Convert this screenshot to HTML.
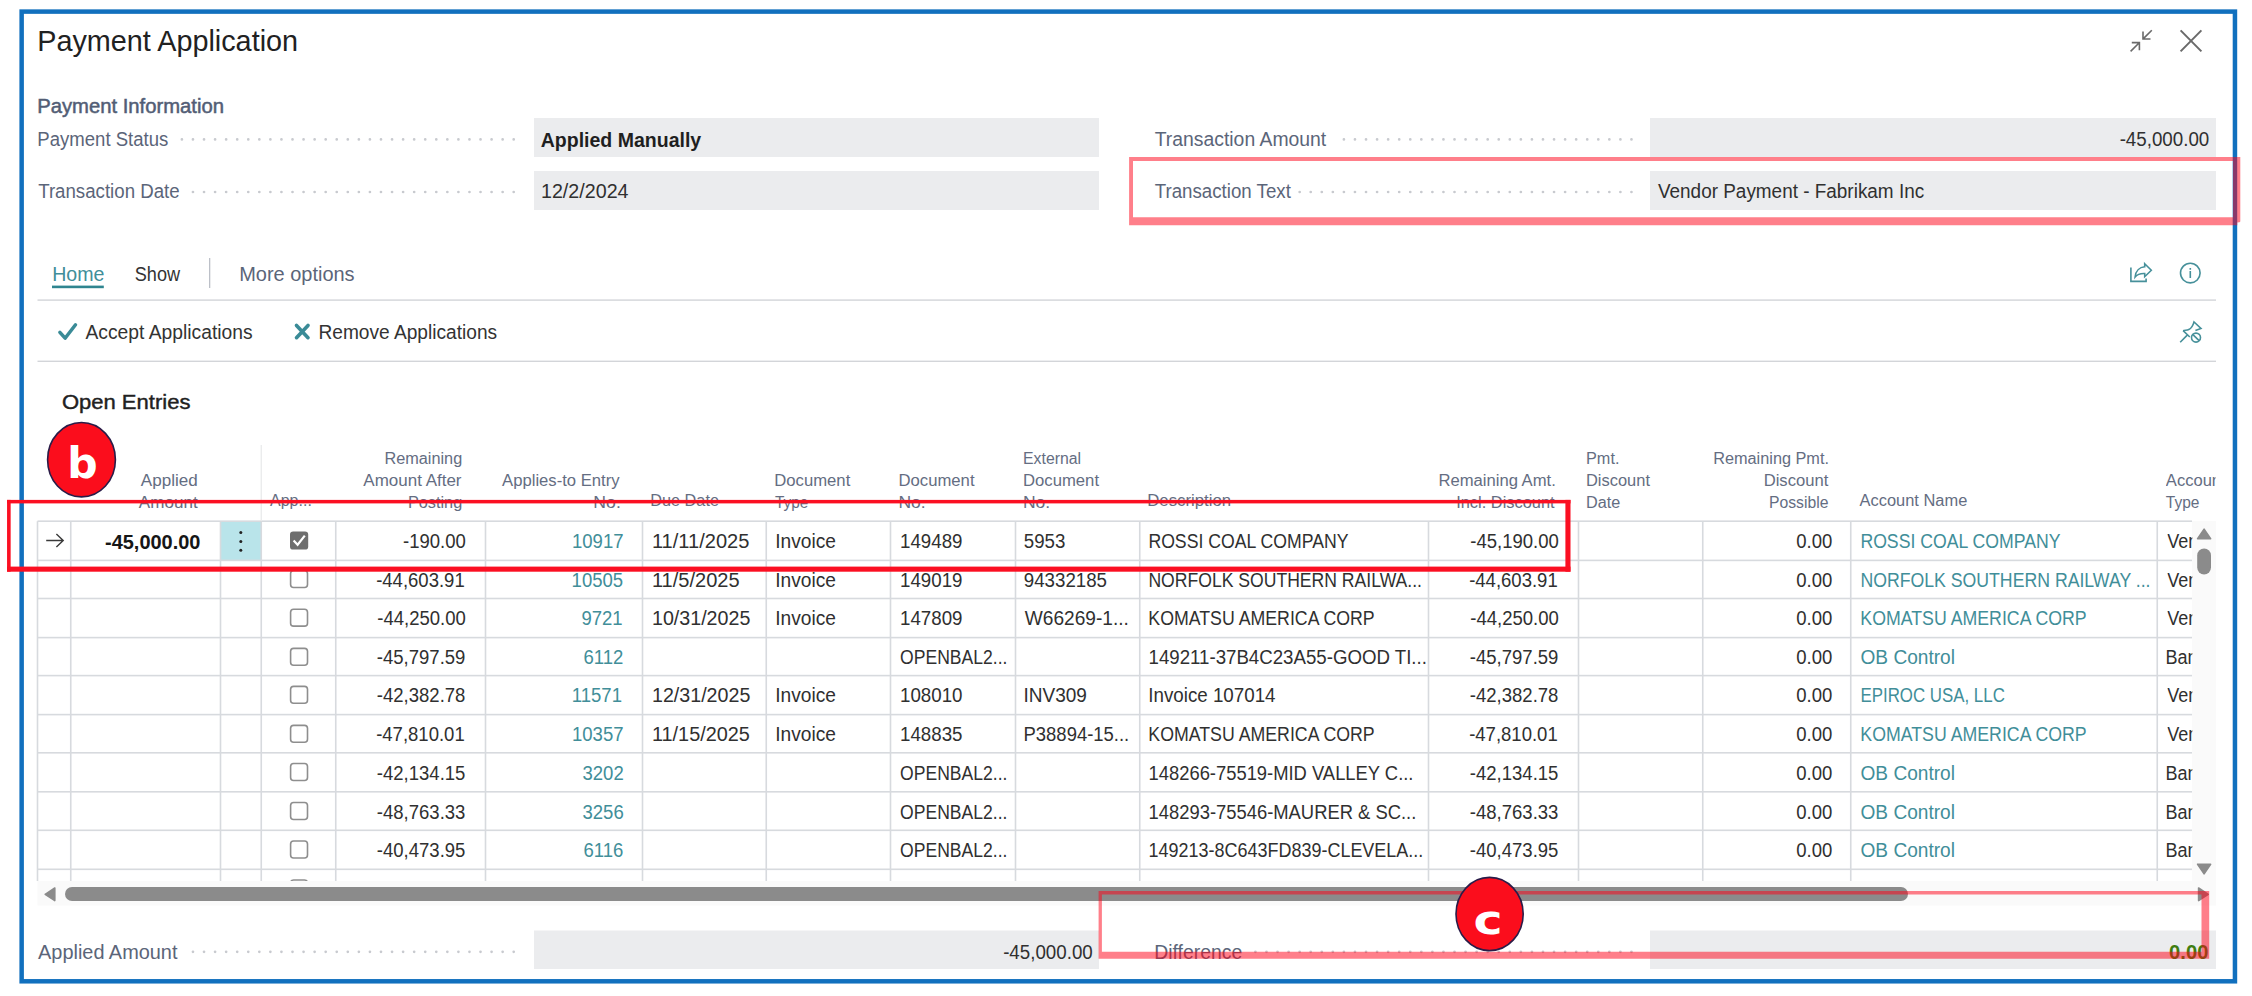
<!DOCTYPE html>
<html lang="en"><head><meta charset="utf-8"><title>Payment Application</title>
<style>
html,body{margin:0;padding:0;background:#fff}
body{width:2252px;height:996px;position:relative;overflow:hidden;font-family:'Liberation Sans',sans-serif}
.t{position:absolute;left:0;top:0;white-space:pre;line-height:1;font-family:'Liberation Sans',sans-serif;transform-origin:0 0}
svg{position:absolute;left:0;top:0;overflow:visible}
</style></head>
<body>
<svg id="boxes" width="2252" height="996" viewBox="0 0 2252 996">
<rect x="21.65" y="11.6" width="2213.3" height="969.7" fill="#fff" stroke="#1170be" stroke-width="4.5"/>
<defs><clipPath id="tb"><rect x="30" y="440" width="2190" height="441"/></clipPath></defs>
<g clip-path="url(#tb)">
<rect x="220.8" y="521.4" width="40.4" height="38.6" fill="#b9e4ea"/>
<rect x="37.5" y="520.4" width="2154.5" height="1.6" fill="#d7dade"/>
<rect x="37.5" y="559.6" width="2154.5" height="1.6" fill="#d7dade"/>
<rect x="37.5" y="597.7" width="2154.5" height="1.6" fill="#d7dade"/>
<rect x="37.5" y="636.8" width="2154.5" height="1.6" fill="#d7dade"/>
<rect x="37.5" y="674.8" width="2154.5" height="1.6" fill="#d7dade"/>
<rect x="37.5" y="713.8" width="2154.5" height="1.6" fill="#d7dade"/>
<rect x="37.5" y="752" width="2154.5" height="1.6" fill="#d7dade"/>
<rect x="37.5" y="791" width="2154.5" height="1.6" fill="#d7dade"/>
<rect x="37.5" y="829.5" width="2154.5" height="1.6" fill="#d7dade"/>
<rect x="37.5" y="868.5" width="2154.5" height="1.6" fill="#d7dade"/>
<rect x="36.7" y="521.2" width="1.6" height="359.8" fill="#d7dade"/>
<rect x="69.95" y="521.2" width="1.6" height="359.8" fill="#d7dade"/>
<rect x="219.7" y="521.2" width="1.6" height="359.8" fill="#d7dade"/>
<rect x="260.45" y="521.2" width="1.6" height="359.8" fill="#d7dade"/>
<rect x="334.95" y="521.2" width="1.6" height="359.8" fill="#d7dade"/>
<rect x="484.7" y="521.2" width="1.6" height="359.8" fill="#d7dade"/>
<rect x="641.7" y="521.2" width="1.6" height="359.8" fill="#d7dade"/>
<rect x="765.45" y="521.2" width="1.6" height="359.8" fill="#d7dade"/>
<rect x="889.7" y="521.2" width="1.6" height="359.8" fill="#d7dade"/>
<rect x="1014.7" y="521.2" width="1.6" height="359.8" fill="#d7dade"/>
<rect x="1138.95" y="521.2" width="1.6" height="359.8" fill="#d7dade"/>
<rect x="1427.7" y="521.2" width="1.6" height="359.8" fill="#d7dade"/>
<rect x="1577.7" y="521.2" width="1.6" height="359.8" fill="#d7dade"/>
<rect x="1701.95" y="521.2" width="1.6" height="359.8" fill="#d7dade"/>
<rect x="1849.95" y="521.2" width="1.6" height="359.8" fill="#d7dade"/>
<rect x="2156.45" y="521.2" width="1.6" height="359.8" fill="#d7dade"/>
<rect x="260.6" y="445" width="1.3" height="76" fill="#e9eaec"/>
<rect x="290.6" y="570.55" width="16.9" height="16.9" fill="#fff" rx="3" stroke="#8e8e8e" stroke-width="1.6"/>
<rect x="290.6" y="609.25" width="16.9" height="16.9" fill="#fff" rx="3" stroke="#8e8e8e" stroke-width="1.6"/>
<rect x="290.6" y="648.35" width="16.9" height="16.9" fill="#fff" rx="3" stroke="#8e8e8e" stroke-width="1.6"/>
<rect x="290.6" y="686.35" width="16.9" height="16.9" fill="#fff" rx="3" stroke="#8e8e8e" stroke-width="1.6"/>
<rect x="290.6" y="725.35" width="16.9" height="16.9" fill="#fff" rx="3" stroke="#8e8e8e" stroke-width="1.6"/>
<rect x="290.6" y="763.55" width="16.9" height="16.9" fill="#fff" rx="3" stroke="#8e8e8e" stroke-width="1.6"/>
<rect x="290.6" y="802.55" width="16.9" height="16.9" fill="#fff" rx="3" stroke="#8e8e8e" stroke-width="1.6"/>
<rect x="290.6" y="841.05" width="16.9" height="16.9" fill="#fff" rx="3" stroke="#8e8e8e" stroke-width="1.6"/>
<rect x="290.6" y="880.05" width="16.9" height="16.9" fill="#fff" rx="3" stroke="#8e8e8e" stroke-width="1.6"/>
</g>
<rect x="534" y="118" width="565" height="39" fill="#ebecee"/>
<rect x="534" y="930.5" width="565" height="38.5" fill="#ebecee"/>
<rect x="1650" y="118" width="566" height="39" fill="#ebecee"/>
<rect x="1650" y="930.5" width="566" height="38.5" fill="#ebecee"/>
<rect x="534" y="171" width="565" height="39" fill="#ebecee"/>
<rect x="1650" y="171" width="566" height="39" fill="#ebecee"/>
<line x1="181.9" y1="139.4" x2="521" y2="139.4" stroke="#c8cacf" stroke-width="2.7" stroke-linecap="round" stroke-dasharray="0.01 11.05"/>
<line x1="192.96" y1="192" x2="521" y2="192" stroke="#c8cacf" stroke-width="2.7" stroke-linecap="round" stroke-dasharray="0.01 11.05"/>
<line x1="1343.9" y1="139.4" x2="1632" y2="139.4" stroke="#c8cacf" stroke-width="2.7" stroke-linecap="round" stroke-dasharray="0.01 11.05"/>
<line x1="1299.66" y1="192" x2="1632" y2="192" stroke="#c8cacf" stroke-width="2.7" stroke-linecap="round" stroke-dasharray="0.01 11.05"/>
<line x1="192.96" y1="951.8" x2="521" y2="951.8" stroke="#c8cacf" stroke-width="2.7" stroke-linecap="round" stroke-dasharray="0.01 11.05"/>
<line x1="1255.42" y1="951.8" x2="1632" y2="951.8" stroke="#c8cacf" stroke-width="2.7" stroke-linecap="round" stroke-dasharray="0.01 11.05"/>
<rect x="52" y="285.6" width="51.8" height="2.6" fill="#2f858f"/>
<rect x="209" y="258" width="1.3" height="30" fill="#bcc0c8"/>
<rect x="37.5" y="299.4" width="2178.5" height="1.4" fill="#d3d5d9"/>
<rect x="37.5" y="360.6" width="2178.5" height="1.4" fill="#d3d5d9"/>
<rect x="2192" y="521" width="24" height="360" fill="#fafafa"/>
<rect x="37.5" y="881" width="2178.5" height="24.5" fill="#fafafa"/>
<rect x="65" y="887" width="1843" height="14" fill="#8b8b8b" rx="7"/>
<rect x="2197.2" y="548.6" width="13.8" height="25.8" fill="#8b8b8b" rx="6.9"/>
</svg>
<div id="texts">
<span class="t" style="font-size:29.4px;color:#212121;transform:translate(37.24px,26.25px) scaleX(0.9793)">Payment Application</span>
<span class="t" style="font-size:20.1px;color:#525d75;transform:translate(37.19px,96.2px) scaleX(1.0071);-webkit-text-stroke:0.5px #525d75">Payment Information</span>
<span class="t" style="font-size:19.4px;color:#5b6579;transform:translate(37.29px,130.25px) scaleX(0.9575)">Payment Status</span>
<span class="t" style="font-size:19.4px;color:#5b6579;transform:translate(38.18px,181.5px) scaleX(0.9628)">Transaction Date</span>
<span class="t" style="font-size:19.4px;color:#1f1f1f;transform:translate(540.72px,130.8px) scaleX(1.0065);font-weight:700">Applied Manually</span>
<span class="t" style="font-size:19.4px;color:#303030;transform:translate(540.97px,181.5px) scaleX(1.0149)">12/2/2024</span>
<span class="t" style="font-size:19.4px;color:#5b6579;transform:translate(1154.68px,130.25px) scaleX(0.9990)">Transaction Amount</span>
<span class="t" style="font-size:19.4px;color:#5b6579;transform:translate(1154.68px,181.5px) scaleX(0.9650)">Transaction Text</span>
<span class="t" style="font-size:19.4px;color:#303030;transform:translate(2119.63px,130.25px) scaleX(0.9670)">-45,000.00</span>
<span class="t" style="font-size:19.4px;color:#303030;transform:translate(1657.98px,181.5px) scaleX(0.9762)">Vendor Payment - Fabrikam Inc</span>
<span class="t" style="font-size:19.4px;color:#418e99;transform:translate(52.18px,265.25px) scaleX(1.0112)">Home</span>
<span class="t" style="font-size:19.4px;color:#333333;transform:translate(134.77px,265.25px) scaleX(0.9333)">Show</span>
<span class="t" style="font-size:19.4px;color:#5b6579;transform:translate(239.14px,265.25px) scaleX(1.0300)">More options</span>
<span class="t" style="font-size:19.4px;color:#333333;transform:translate(85.48px,322.75px) scaleX(0.9942)">Accept Applications</span>
<span class="t" style="font-size:19.4px;color:#333333;transform:translate(318.48px,322.75px) scaleX(0.9863)">Remove Applications</span>
<span class="t" style="font-size:20.3px;color:#212121;transform:translate(61.89px,392.25px) scaleX(1.0856);-webkit-text-stroke:0.4px #212121">Open Entries</span>
<span class="t" style="font-size:19.4px;color:#5b6579;transform:translate(38.08px,942.7px) scaleX(1.0259)">Applied Amount</span>
<span class="t" style="font-size:19.4px;color:#303030;transform:translate(1003.13px,942.6px) scaleX(0.9670)">-45,000.00</span>
<span class="t" style="font-size:19.4px;color:#5b6579;transform:translate(1154.2px,942.7px) scaleX(1.0006)">Difference</span>
<span class="t" style="font-size:19.4px;color:#3f7d10;transform:translate(2169.06px,942.6px) scaleX(1.0417);font-weight:700">0.00</span>
<span class="t" style="font-size:17.3px;color:#646d82;transform:translate(140.85px,472.25px) scaleX(0.9868)">Applied</span>
<span class="t" style="font-size:17.3px;color:#646d82;transform:translate(138.85px,494.25px) scaleX(0.9873)">Amount</span>
<span class="t" style="font-size:17.3px;color:#646d82;transform:translate(270.08px,491.6px) scaleX(0.9243)">App...</span>
<span class="t" style="font-size:17.3px;color:#646d82;transform:translate(384.41px,450.25px) scaleX(0.9414)">Remaining</span>
<span class="t" style="font-size:17.3px;color:#646d82;transform:translate(363.35px,472.25px) scaleX(0.9825)">Amount After</span>
<span class="t" style="font-size:17.3px;color:#646d82;transform:translate(407.91px,494.25px) scaleX(0.9420)">Posting</span>
<span class="t" style="font-size:17.3px;color:#646d82;transform:translate(502.1px,472.25px) scaleX(0.9631)">Applies-to Entry</span>
<span class="t" style="font-size:17.3px;color:#646d82;transform:translate(593.33px,494.25px) scaleX(1.0208)">No.</span>
<span class="t" style="font-size:17.3px;color:#646d82;transform:translate(650.26px,491.6px) scaleX(0.9408)">Due Date</span>
<span class="t" style="font-size:17.3px;color:#646d82;transform:translate(774.23px,472.25px) scaleX(0.9654)">Document</span>
<span class="t" style="font-size:17.3px;color:#646d82;transform:translate(775.03px,494.25px) scaleX(0.8911)">Type</span>
<span class="t" style="font-size:17.3px;color:#646d82;transform:translate(898.48px,472.25px) scaleX(0.9654)">Document</span>
<span class="t" style="font-size:17.3px;color:#646d82;transform:translate(898.44px,494.25px) scaleX(1.0125)">No.</span>
<span class="t" style="font-size:17.3px;color:#646d82;transform:translate(1023.04px,450.25px) scaleX(0.9148)">External</span>
<span class="t" style="font-size:17.3px;color:#646d82;transform:translate(1022.98px,472.25px) scaleX(0.9654)">Document</span>
<span class="t" style="font-size:17.3px;color:#646d82;transform:translate(1022.94px,494.25px) scaleX(1.0125)">No.</span>
<span class="t" style="font-size:17.3px;color:#646d82;transform:translate(1147.23px,491.6px) scaleX(0.9708)">Description</span>
<span class="t" style="font-size:17.3px;color:#646d82;transform:translate(1438.39px,472.25px) scaleX(0.9625)">Remaining Amt.</span>
<span class="t" style="font-size:17.3px;color:#646d82;transform:translate(1456.2px,494.25px) scaleX(0.9485)">Incl. Discount</span>
<span class="t" style="font-size:17.3px;color:#646d82;transform:translate(1586.01px,450.25px) scaleX(0.9409)">Pmt.</span>
<span class="t" style="font-size:17.3px;color:#646d82;transform:translate(1586px,472.25px) scaleX(0.9515)">Discount</span>
<span class="t" style="font-size:17.3px;color:#646d82;transform:translate(1586.01px,494.25px) scaleX(0.9371)">Date</span>
<span class="t" style="font-size:17.3px;color:#646d82;transform:translate(1713.16px,450.25px) scaleX(0.9421)">Remaining Pmt.</span>
<span class="t" style="font-size:17.3px;color:#646d82;transform:translate(1763.64px,472.25px) scaleX(0.9621)">Discount</span>
<span class="t" style="font-size:17.3px;color:#646d82;transform:translate(1768.94px,494.25px) scaleX(0.9102)">Possible</span>
<span class="t" style="font-size:17.3px;color:#646d82;transform:translate(1859.58px,491.6px) scaleX(0.9506)">Account Name</span>
<span class="t" style="font-size:17.3px;color:#646d82;transform:translate(2165.83px,472.25px) scaleX(0.9584);width:52.35px;overflow:hidden">Account</span>
<span class="t" style="font-size:17.3px;color:#646d82;transform:translate(2165.78px,494.25px) scaleX(0.8978)">Type</span>
<span class="t" style="font-size:19.4px;color:#303030;transform:translate(403.03px,531.9px) scaleX(0.9550)">-190.00</span>
<span class="t" style="font-size:19.4px;color:#418e99;transform:translate(571.99px,531.9px) scaleX(0.9550)">10917</span>
<span class="t" style="font-size:19.4px;color:#303030;transform:translate(651.94px,531.9px) scaleX(1.0352)">11/11/2025</span>
<span class="t" style="font-size:19.4px;color:#303030;transform:translate(775.22px,531.9px) scaleX(0.9881)">Invoice</span>
<span class="t" style="font-size:19.4px;color:#303030;transform:translate(900.02px,531.9px) scaleX(0.9646)">149489</span>
<span class="t" style="font-size:19.4px;color:#303030;transform:translate(1023.77px,531.9px) scaleX(0.9639)">5953</span>
<span class="t" style="font-size:19.4px;color:#303030;transform:translate(1148.38px,531.9px) scaleX(0.9104)">ROSSI COAL COMPANY</span>
<span class="t" style="font-size:19.4px;color:#303030;transform:translate(1470.24px,531.9px) scaleX(0.9550)">-45,190.00</span>
<span class="t" style="font-size:19.4px;color:#303030;transform:translate(1796.26px,531.9px) scaleX(0.9550)">0.00</span>
<span class="t" style="font-size:19.4px;color:#418e99;transform:translate(1860.38px,531.9px) scaleX(0.9104)">ROSSI COAL COMPANY</span>
<span class="t" style="font-size:19.4px;color:#303030;transform:translate(2167.3px,531.9px) scaleX(0.9300);width:26.56px;overflow:hidden">Vendor</span>
<span class="t" style="font-size:19.4px;color:#303030;transform:translate(376.14px,571.1px) scaleX(0.9550)">-44,603.91</span>
<span class="t" style="font-size:19.4px;color:#418e99;transform:translate(571.59px,571.1px) scaleX(0.9550)">10505</span>
<span class="t" style="font-size:19.4px;color:#303030;transform:translate(651.95px,571.1px) scaleX(1.0334)">11/5/2025</span>
<span class="t" style="font-size:19.4px;color:#303030;transform:translate(775.22px,571.1px) scaleX(0.9881)">Invoice</span>
<span class="t" style="font-size:19.4px;color:#303030;transform:translate(900.02px,571.1px) scaleX(0.9646)">149019</span>
<span class="t" style="font-size:19.4px;color:#303030;transform:translate(1023.77px,571.1px) scaleX(0.9649)">94332185</span>
<span class="t" style="font-size:19.4px;color:#303030;transform:translate(1148.39px,571.1px) scaleX(0.9070)">NORFOLK SOUTHERN RAILWA...</span>
<span class="t" style="font-size:19.4px;color:#303030;transform:translate(1469.14px,571.1px) scaleX(0.9550)">-44,603.91</span>
<span class="t" style="font-size:19.4px;color:#303030;transform:translate(1796.26px,571.1px) scaleX(0.9550)">0.00</span>
<span class="t" style="font-size:19.4px;color:#418e99;transform:translate(1860.38px,571.1px) scaleX(0.9118)">NORFOLK SOUTHERN RAILWAY ...</span>
<span class="t" style="font-size:19.4px;color:#303030;transform:translate(2167.3px,571.1px) scaleX(0.9300);width:26.56px;overflow:hidden">Vendor</span>
<span class="t" style="font-size:19.4px;color:#303030;transform:translate(377.24px,609.2px) scaleX(0.9550)">-44,250.00</span>
<span class="t" style="font-size:19.4px;color:#418e99;transform:translate(581.39px,609.2px) scaleX(0.9550)">9721</span>
<span class="t" style="font-size:19.4px;color:#303030;transform:translate(651.97px,609.2px) scaleX(1.0134)">10/31/2025</span>
<span class="t" style="font-size:19.4px;color:#303030;transform:translate(775.22px,609.2px) scaleX(0.9881)">Invoice</span>
<span class="t" style="font-size:19.4px;color:#303030;transform:translate(900.02px,609.2px) scaleX(0.9646)">147809</span>
<span class="t" style="font-size:19.4px;color:#303030;transform:translate(1024.73px,609.2px) scaleX(0.9858)">W66269-1...</span>
<span class="t" style="font-size:19.4px;color:#303030;transform:translate(1148.37px,609.2px) scaleX(0.9145)">KOMATSU AMERICA CORP</span>
<span class="t" style="font-size:19.4px;color:#303030;transform:translate(1470.24px,609.2px) scaleX(0.9550)">-44,250.00</span>
<span class="t" style="font-size:19.4px;color:#303030;transform:translate(1796.26px,609.2px) scaleX(0.9550)">0.00</span>
<span class="t" style="font-size:19.4px;color:#418e99;transform:translate(1860.37px,609.2px) scaleX(0.9145)">KOMATSU AMERICA CORP</span>
<span class="t" style="font-size:19.4px;color:#303030;transform:translate(2167.3px,609.2px) scaleX(0.9300);width:26.56px;overflow:hidden">Vendor</span>
<span class="t" style="font-size:19.4px;color:#303030;transform:translate(376.84px,648.3px) scaleX(0.9550)">-45,797.59</span>
<span class="t" style="font-size:19.4px;color:#418e99;transform:translate(583.45px,648.3px) scaleX(0.9550)">6112</span>
<span class="t" style="font-size:19.4px;color:#303030;transform:translate(900.07px,648.3px) scaleX(0.9053)">OPENBAL2...</span>
<span class="t" style="font-size:19.4px;color:#303030;transform:translate(1148.52px,648.3px) scaleX(0.9625)">149211-37B4C23A55-GOOD TI...</span>
<span class="t" style="font-size:19.4px;color:#303030;transform:translate(1469.84px,648.3px) scaleX(0.9550)">-45,797.59</span>
<span class="t" style="font-size:19.4px;color:#303030;transform:translate(1796.26px,648.3px) scaleX(0.9550)">0.00</span>
<span class="t" style="font-size:19.4px;color:#418e99;transform:translate(1860.5px,648.3px) scaleX(0.9843)">OB Control</span>
<span class="t" style="font-size:19.4px;color:#303030;transform:translate(2165.44px,648.3px) scaleX(0.9300);width:28.56px;overflow:hidden">Bank Account</span>
<span class="t" style="font-size:19.4px;color:#303030;transform:translate(376.84px,686.3px) scaleX(0.9550)">-42,382.78</span>
<span class="t" style="font-size:19.4px;color:#418e99;transform:translate(571.84px,686.3px) scaleX(0.9550)">11571</span>
<span class="t" style="font-size:19.4px;color:#303030;transform:translate(651.97px,686.3px) scaleX(1.0134)">12/31/2025</span>
<span class="t" style="font-size:19.4px;color:#303030;transform:translate(775.22px,686.3px) scaleX(0.9881)">Invoice</span>
<span class="t" style="font-size:19.4px;color:#303030;transform:translate(900.02px,686.3px) scaleX(0.9646)">108010</span>
<span class="t" style="font-size:19.4px;color:#303030;transform:translate(1023.49px,686.3px) scaleX(0.9806)">INV309</span>
<span class="t" style="font-size:19.4px;color:#303030;transform:translate(1148.27px,686.3px) scaleX(0.9674)">Invoice 107014</span>
<span class="t" style="font-size:19.4px;color:#303030;transform:translate(1469.84px,686.3px) scaleX(0.9550)">-42,382.78</span>
<span class="t" style="font-size:19.4px;color:#303030;transform:translate(1796.26px,686.3px) scaleX(0.9550)">0.00</span>
<span class="t" style="font-size:19.4px;color:#418e99;transform:translate(1860.46px,686.3px) scaleX(0.8699)">EPIROC USA, LLC</span>
<span class="t" style="font-size:19.4px;color:#303030;transform:translate(2167.3px,686.3px) scaleX(0.9300);width:26.56px;overflow:hidden">Vendor</span>
<span class="t" style="font-size:19.4px;color:#303030;transform:translate(376.14px,725.3px) scaleX(0.9550)">-47,810.01</span>
<span class="t" style="font-size:19.4px;color:#418e99;transform:translate(571.99px,725.3px) scaleX(0.9550)">10357</span>
<span class="t" style="font-size:19.4px;color:#303030;transform:translate(651.96px,725.3px) scaleX(1.0241)">11/15/2025</span>
<span class="t" style="font-size:19.4px;color:#303030;transform:translate(775.22px,725.3px) scaleX(0.9881)">Invoice</span>
<span class="t" style="font-size:19.4px;color:#303030;transform:translate(900.02px,725.3px) scaleX(0.9646)">148835</span>
<span class="t" style="font-size:19.4px;color:#303030;transform:translate(1023.55px,725.3px) scaleX(0.9514)">P38894-15...</span>
<span class="t" style="font-size:19.4px;color:#303030;transform:translate(1148.37px,725.3px) scaleX(0.9145)">KOMATSU AMERICA CORP</span>
<span class="t" style="font-size:19.4px;color:#303030;transform:translate(1469.14px,725.3px) scaleX(0.9550)">-47,810.01</span>
<span class="t" style="font-size:19.4px;color:#303030;transform:translate(1796.26px,725.3px) scaleX(0.9550)">0.00</span>
<span class="t" style="font-size:19.4px;color:#418e99;transform:translate(1860.37px,725.3px) scaleX(0.9145)">KOMATSU AMERICA CORP</span>
<span class="t" style="font-size:19.4px;color:#303030;transform:translate(2167.3px,725.3px) scaleX(0.9300);width:26.56px;overflow:hidden">Vendor</span>
<span class="t" style="font-size:19.4px;color:#303030;transform:translate(376.84px,763.5px) scaleX(0.9550)">-42,134.15</span>
<span class="t" style="font-size:19.4px;color:#418e99;transform:translate(582.49px,763.5px) scaleX(0.9550)">3202</span>
<span class="t" style="font-size:19.4px;color:#303030;transform:translate(900.07px,763.5px) scaleX(0.9053)">OPENBAL2...</span>
<span class="t" style="font-size:19.4px;color:#303030;transform:translate(1148.53px,763.5px) scaleX(0.9477)">148266-75519-MID VALLEY C...</span>
<span class="t" style="font-size:19.4px;color:#303030;transform:translate(1469.84px,763.5px) scaleX(0.9550)">-42,134.15</span>
<span class="t" style="font-size:19.4px;color:#303030;transform:translate(1796.26px,763.5px) scaleX(0.9550)">0.00</span>
<span class="t" style="font-size:19.4px;color:#418e99;transform:translate(1860.5px,763.5px) scaleX(0.9843)">OB Control</span>
<span class="t" style="font-size:19.4px;color:#303030;transform:translate(2165.44px,763.5px) scaleX(0.9300);width:28.56px;overflow:hidden">Bank Account</span>
<span class="t" style="font-size:19.4px;color:#303030;transform:translate(376.84px,802.5px) scaleX(0.9550)">-48,763.33</span>
<span class="t" style="font-size:19.4px;color:#418e99;transform:translate(582.49px,802.5px) scaleX(0.9550)">3256</span>
<span class="t" style="font-size:19.4px;color:#303030;transform:translate(900.07px,802.5px) scaleX(0.9053)">OPENBAL2...</span>
<span class="t" style="font-size:19.4px;color:#303030;transform:translate(1148.53px,802.5px) scaleX(0.9483)">148293-75546-MAURER &amp; SC...</span>
<span class="t" style="font-size:19.4px;color:#303030;transform:translate(1469.84px,802.5px) scaleX(0.9550)">-48,763.33</span>
<span class="t" style="font-size:19.4px;color:#303030;transform:translate(1796.26px,802.5px) scaleX(0.9550)">0.00</span>
<span class="t" style="font-size:19.4px;color:#418e99;transform:translate(1860.5px,802.5px) scaleX(0.9843)">OB Control</span>
<span class="t" style="font-size:19.4px;color:#303030;transform:translate(2165.44px,802.5px) scaleX(0.9300);width:28.56px;overflow:hidden">Bank Account</span>
<span class="t" style="font-size:19.4px;color:#303030;transform:translate(376.84px,841px) scaleX(0.9550)">-40,473.95</span>
<span class="t" style="font-size:19.4px;color:#418e99;transform:translate(583.45px,841px) scaleX(0.9550)">6116</span>
<span class="t" style="font-size:19.4px;color:#303030;transform:translate(900.07px,841px) scaleX(0.9053)">OPENBAL2...</span>
<span class="t" style="font-size:19.4px;color:#303030;transform:translate(1148.55px,841px) scaleX(0.9269)">149213-8C643FD839-CLEVELA...</span>
<span class="t" style="font-size:19.4px;color:#303030;transform:translate(1469.84px,841px) scaleX(0.9550)">-40,473.95</span>
<span class="t" style="font-size:19.4px;color:#303030;transform:translate(1796.26px,841px) scaleX(0.9550)">0.00</span>
<span class="t" style="font-size:19.4px;color:#418e99;transform:translate(1860.5px,841px) scaleX(0.9843)">OB Control</span>
<span class="t" style="font-size:19.4px;color:#303030;transform:translate(2165.44px,841px) scaleX(0.9300);width:28.56px;overflow:hidden">Bank Account</span>
<span class="t" style="font-size:20.6px;color:#161616;transform:translate(105.01px,531.7px) scaleX(0.9693);font-weight:700">-45,000.00</span>
</div>
<svg width="2252" height="996" viewBox="0 0 2252 996" fill="none" stroke-linecap="butt">
<!-- window buttons -->
<g stroke="#6a6a6a" stroke-width="2">
<path d="M2180.6 30.4 L2201.4 51.4 M2201.4 30.4 L2180.6 51.4"/>
<path d="M2151.8 30.2 L2143.4 38.6 M2143 31.5 V39 H2150.5" stroke-width="1.6"/>
<path d="M2130.6 51.4 L2139 43 M2131.8 42.6 H2139.4 V50.2" stroke-width="1.6"/>
</g>
<!-- share / info / pin -->
<g stroke="#46909a" stroke-width="1.6">
<path d="M2130.9 267.6 V281.4 H2146.1 V278.4"/>
<path d="M2144.7 263.7 L2151.3 270.2 L2144.7 276.7 V273.5 C2140.2 273.3 2137.2 274.4 2135.1 277 C2135.6 271 2139.6 267.2 2144.7 266.8 Z" stroke-linejoin="miter"/>
<circle cx="2190.3" cy="273.1" r="9.8"/>
<path d="M2190.3 271 V278 M2190.3 268 V269.7"/>
<path d="M2180.2 342.2 L2187 335.4 M2183.1 330.7 L2189.8 337 M2183.1 330.7 C2185 330.2 2187 330.4 2188.8 329.6 C2191.4 328.4 2193 325.6 2194 321.9 L2201 328.4 L2195.4 330.6"/>
<circle cx="2196" cy="337.6" r="4.5"/>
<path d="M2192.9 334.6 L2199.1 340.6"/>
</g>
<!-- accept / remove -->
<path d="M59.9 332.3 L65.1 338.2 L75.5 324.8" stroke="#3a8b97" stroke-width="3.5" stroke-linecap="round" stroke-linejoin="round"/>
<path d="M296.5 325.4 L308 337.7 M308 325.4 L296.5 337.7" stroke="#3a8b97" stroke-width="3.6" stroke-linecap="round"/>
<!-- row arrow -->
<path d="M46.2 540.5 H63.2 M56.4 534 L63.2 540.5 L56.4 547" stroke="#3a3a3a" stroke-width="1.4"/>
<!-- kebab -->
<g fill="#222"><circle cx="240.8" cy="532.6" r="1.5"/><circle cx="240.8" cy="541.4" r="1.5"/><circle cx="240.8" cy="550.2" r="1.5"/></g>
<!-- checked box -->
<rect x="290" y="531.4" width="18.2" height="18.2" rx="3.2" fill="#6e6e6e"/>
<path d="M293.6 540.6 L297.6 544.8 L304.8 535.6" stroke="#fff" stroke-width="2.2"/>
<!-- scroll arrows -->
<g fill="#8b8b8b" stroke="#8b8b8b" stroke-width="1.6" stroke-linejoin="round">
<path d="M2197.6 538.8 L2204.1 529.2 L2210.6 538.8 Z"/>
<path d="M2197.6 864.2 L2210.6 864.2 L2204.1 873.8 Z"/>
<path d="M54.8 888 L54.8 900.6 L45.2 894.3 Z"/>
<path d="M2198.6 888 L2198.6 900.6 L2208.2 894.3 Z"/>
</g>
</svg>

<svg id="overlay" width="2252" height="996" viewBox="0 0 2252 996" fill="none">
<path fill="#ff0016" fill-opacity="0.5" fill-rule="evenodd" d="M1129.1 157.1 H2240.3 V221.5 Q2240.3 222.5 2237.3 222.5 V225.3 H1129.1 Z M1133 161.1 V217.3 H2233 V161.1 Z"/>
<path fill="#ff0016" fill-opacity="0.5" fill-rule="evenodd" d="M1098.6 891.1 H2209.2 V958.7 H1098.6 Z M1101.9 894.4 V951.8 H2201.5 V894.4 Z"/>
<g fill="#fb0f22">
<rect x="7.05" y="499.9" width="1563.45" height="3.5"/>
<rect x="7.05" y="566.6" width="1563.45" height="5.1"/>
<rect x="7.05" y="499.9" width="3.6" height="71.8"/>
<rect x="1565.4" y="499.9" width="5.1" height="71.8"/>
</g>
<ellipse cx="81.5" cy="459.7" rx="33.9" ry="37.2" fill="#fb0d1c" stroke="#2a1c48" stroke-width="1.6"/>
<ellipse cx="1489.6" cy="914" rx="33.6" ry="36.6" fill="#fb0d1c" stroke="#2a1c48" stroke-width="1.6"/>
</svg>
<span class="t" style="transform:translate(67.3px,443.4px);font-family:'DejaVu Sans','Liberation Sans',sans-serif;font-size:42.5px;font-weight:700;color:#fff">b</span>
<span class="t" style="font-family:'DejaVu Sans','Liberation Sans',sans-serif;font-size:41px;font-weight:700;color:#fff;transform:translate(1473.5px,899.6px) scaleX(1.2)">c</span>

</body></html>
